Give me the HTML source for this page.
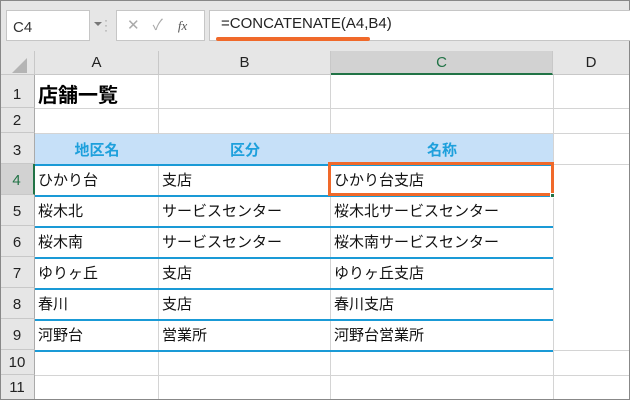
<!DOCTYPE html>
<html><head><meta charset="utf-8"><style>
*{margin:0;padding:0;box-sizing:border-box}
body{width:630px;height:400px;overflow:hidden;background:#fff;font-family:"Liberation Sans","Noto Sans CJK JP",sans-serif;position:relative}
.a{position:absolute}
.top{left:0;top:0;width:630px;height:51px;background:#e6e6e6;border:1px solid #888;border-bottom:none}
.box{background:#fff;border:1px solid #c6c6c6}
.ch{top:51px;height:24px;background:#e6e6e6;border-right:1px solid #c8c8c8;border-bottom:1px solid #c8c8c8;text-align:center;font-size:15px;line-height:23px;color:#222}
.rh{left:0;width:35px;background:#e6e6e6;border-bottom:1px solid #c8c8c8;border-right:1px solid #aaa;text-align:center;font-size:15px;color:#222}
.vl{top:75px;width:1px;height:325px;background:#d4d4d4}
.hl{left:35px;height:1px;background:#d4d4d4;width:595px}
.bl{left:35px;height:1.5px;background:#1a9ad6;width:518px}
.t{font-size:15px;color:#111;white-space:nowrap}
.h{font-size:15px;font-weight:bold;color:#1ea0dc;text-align:center}
</style></head><body>
<div class="a top"></div>
<div class="a box" style="left:6px;top:10px;width:84px;height:31px;font-size:15px;line-height:34px;padding-left:6px;color:#333">C4</div>
<div class="a" style="left:94px;top:22px;width:0;height:0;border-left:4px solid transparent;border-right:4px solid transparent;border-top:4px solid #777"></div>
<div class="a" style="left:104px;top:18px;color:#999;font-size:12px;line-height:5px">·<br>·<br>·</div>
<div class="a box" style="left:116px;top:10px;width:89px;height:31px;color:#aaa;font-size:15px;line-height:30px"><span style="margin-left:10px">✕</span><span style="margin-left:13px">✓</span><span style="margin-left:15px;color:#555;font-style:italic;font-family:'Liberation Serif',serif;font-size:13px">fx</span></div>
<div class="a box" style="left:209px;top:10px;width:425px;height:31px;font-size:15px;line-height:26px;padding-left:11px;color:#222">=CONCATENATE(A4,B4)</div>
<div class="a" style="left:216px;top:37px;width:154px;height:4px;background:#f0692a;border-radius:2px"></div>
<div class="a" style="left:0;top:51px;width:35px;height:24px;background:#e6e6e6;border-right:1px solid #c8c8c8;border-bottom:1px solid #c8c8c8"></div>
<div class="a" style="left:12px;top:58px;width:0;height:0;border-left:15px solid transparent;border-bottom:15px solid #b4b4b4"></div>
<div class="a ch" style="left:35px;width:124px">A</div>
<div class="a ch" style="left:159px;width:172px">B</div>
<div class="a ch" style="left:331px;width:222px;background:#d2d2d2;border-bottom:2px solid #217346;color:#217346">C</div>
<div class="a ch" style="left:553px;width:77px">D</div>
<div class="a vl" style="left:158px"></div>
<div class="a vl" style="left:330px"></div>
<div class="a vl" style="left:553px"></div>
<div class="a" style="left:35px;top:133px;width:518px;height:31px;background:#c6e0f8"></div>
<div class="a hl" style="top:108px"></div>
<div class="a hl" style="top:133px"></div>
<div class="a hl" style="top:164px"></div>
<div class="a hl" style="top:350px"></div>
<div class="a hl" style="top:375px"></div>
<div class="a bl" style="top:164px"></div>
<div class="a bl" style="top:195px"></div>
<div class="a bl" style="top:226px"></div>
<div class="a bl" style="top:257px"></div>
<div class="a bl" style="top:288px"></div>
<div class="a bl" style="top:319px"></div>
<div class="a bl" style="top:350px"></div>
<div class="a rh" style="top:75px;height:33px;line-height:40px">1</div>
<div class="a rh" style="top:108px;height:25px;line-height:25px">2</div>
<div class="a rh" style="top:133px;height:31px;line-height:36px">3</div>
<div class="a rh" style="top:164px;height:31px;line-height:34px;background:#d2d2d2;border-right:2px solid #217346;color:#217346">4</div>
<div class="a rh" style="top:195px;height:31px;line-height:34px">5</div>
<div class="a rh" style="top:226px;height:31px;line-height:34px">6</div>
<div class="a rh" style="top:257px;height:31px;line-height:34px">7</div>
<div class="a rh" style="top:288px;height:31px;line-height:34px">8</div>
<div class="a rh" style="top:319px;height:31px;line-height:34px">9</div>
<div class="a rh" style="top:350px;height:25px;line-height:25px">10</div>
<div class="a rh" style="top:375px;height:25px;line-height:25px">11</div>
<div class="a" style="left:629px;top:51px;width:1px;height:349px;background:#888"></div>
<div class="a" style="left:0;top:399px;width:630px;height:1px;background:#888"></div>
<div class="a" style="left:0;top:51px;width:1px;height:349px;background:#888"></div>
<div class="a t" style="left:38px;top:79px;font-size:20px;font-weight:bold;color:#000">店舗一覧</div>
<div class="a h" style="left:35px;top:139px;width:124px">地区名</div>
<div class="a h" style="left:159px;top:139px;width:172px">区分</div>
<div class="a h" style="left:331px;top:139px;width:222px">名称</div>
<div class="a t" style="left:38px;top:169px">ひかり台</div><div class="a t" style="left:162px;top:169px">支店</div><div class="a t" style="left:334px;top:169px">ひかり台支店</div>
<div class="a t" style="left:38px;top:200px">桜木北</div><div class="a t" style="left:162px;top:200px">サービスセンター</div><div class="a t" style="left:334px;top:200px">桜木北サービスセンター</div>
<div class="a t" style="left:38px;top:231px">桜木南</div><div class="a t" style="left:162px;top:231px">サービスセンター</div><div class="a t" style="left:334px;top:231px">桜木南サービスセンター</div>
<div class="a t" style="left:38px;top:262px">ゆりヶ丘</div><div class="a t" style="left:162px;top:262px">支店</div><div class="a t" style="left:334px;top:262px">ゆりヶ丘支店</div>
<div class="a t" style="left:38px;top:293px">春川</div><div class="a t" style="left:162px;top:293px">支店</div><div class="a t" style="left:334px;top:293px">春川支店</div>
<div class="a t" style="left:38px;top:324px">河野台</div><div class="a t" style="left:162px;top:324px">営業所</div><div class="a t" style="left:334px;top:324px">河野台営業所</div>
<div class="a" style="left:328px;top:162px;width:226px;height:34px;border:3px solid #f0692a"></div>
<div class="a" style="left:550px;top:193px;width:5px;height:5px;background:#217346;border:1px solid #fff"></div>
</body></html>
